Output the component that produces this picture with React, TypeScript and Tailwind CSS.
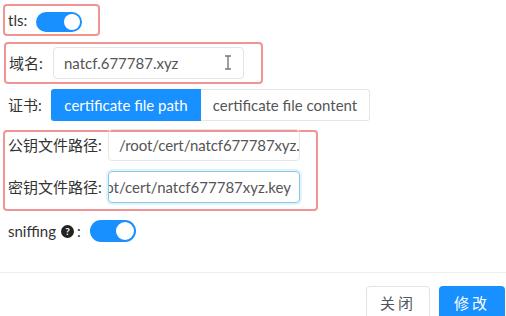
import React from "react";

function Switch({ h = 20 }: { h?: number }) {
  return (
    <div
      className="relative rounded-full bg-[#1890ff] w-[46px]"
      style={{ height: h }}
    >
      <div
        className="absolute top-[2px] right-[2px] rounded-full bg-white"
        style={{ width: h - 4, height: h - 4 }}
      />
    </div>
  );
}

function IBeam() {
  return (
    <svg
      className="absolute right-[11px] top-[7px]"
      width="8"
      height="15"
      viewBox="0 0 8 15"
      fill="none"
      stroke="#777"
      strokeWidth="1.4"
    >
      <path d="M1 1h6M4 1v13M1 14h6" />
    </svg>
  );
}

export default function App() {
  return (
    <div
      className="relative w-[506px] h-[316px] overflow-hidden bg-white text-[15px] text-[#333]"
      style={{ fontFamily: 'Lato, "Noto Sans CJK SC", sans-serif' }}
    >
      <div className="flex flex-col pl-[3px] pt-[4px]">
        {/* tls */}
        <div className="flex items-center w-[97px] h-[32px] border-2 border-[#f29494] rounded-[4px] pl-[3px]">
          <span className="leading-none">tls:</span>
          <div className="ml-[9px] mt-[4px]">
            <Switch h={20} />
          </div>
        </div>

        {/* domain */}
        <div className="flex items-center mt-[6px] ml-[1px] w-[259px] h-[42px] border-2 border-[#f29494] rounded-[4px] pl-[3px]">
          <span className="leading-none w-[44px]">域名:</span>
          <div className="relative flex items-center w-[191px] h-[32px] border border-[#e3e3e3] rounded-[4px] pl-[10px] text-[#555]">
            natcf.677787.xyz
            <IBeam />
          </div>
        </div>

        {/* cert */}
        <div className="flex items-center mt-[5px] h-[32px] pl-[5px]">
          <span className="leading-none w-[43px]">证书:</span>
          <div className="flex h-[32px]">
            <div className="flex items-center justify-center w-[150px] bg-[#1890ff] text-white rounded-l-[3px]">
              certificate file path
            </div>
            <div className="flex items-center justify-center w-[169px] border border-l-0 border-[#e6e6e6] text-[#555] rounded-r-[3px]">
              certificate file content
            </div>
          </div>
        </div>

        {/* keys */}
        <div className="mt-[9px] w-[315px] h-[81px] border-2 border-[#f29494] rounded-[4px] pl-[3px] flex flex-col">
          <div className="flex items-center mt-[-3px] h-[32px]">
            <span className="leading-none w-[100px]">公钥文件路径:</span>
            <div className="flex items-center w-[192px] h-[32px] border border-[#e6e6e6] rounded-[4px] pl-[10px] text-[#555] tracking-[-0.1px] overflow-hidden whitespace-nowrap">
              /root/cert/natcf677787xyz.
            </div>
          </div>
          <div className="flex items-center mt-[10px] h-[32px]">
            <span className="leading-none w-[100px]">密钥文件路径:</span>
            <div className="relative w-[192px] h-[32px] border border-[#86cbe0] shadow-[0_0_0_2px_rgba(24,144,255,0.12)] rounded-[4px] text-[#555] overflow-hidden whitespace-nowrap">
              <span className="absolute right-[8px] top-0 h-full flex items-center">
                /root/cert/natcf677787xyz.key
              </span>
            </div>
          </div>
        </div>

        {/* sniffing */}
        <div className="flex items-center mt-[9px] h-[22px] pl-[5px]">
          <span className="leading-none">sniffing</span>
          <span className="ml-[5px] flex items-center justify-center w-[13px] h-[13px] rounded-full bg-[#222] text-white text-[10px] font-bold leading-none">
            ?
          </span>
          <span className="ml-[3px] leading-none">:</span>
          <div className="ml-[9px]">
            <Switch h={22} />
          </div>
        </div>
      </div>

      {/* footer */}
      <div className="absolute left-0 right-0 top-[272px] border-t border-[#efefef] flex justify-end gap-[9px] pt-[13px] pr-[1px]">
        <div className="flex items-center justify-center w-[64px] h-[34px] border border-[#e3e3e3] rounded-[4px] text-[#555] tracking-[3px]">
          关闭
        </div>
        <div className="flex items-center justify-center w-[66px] h-[34px] bg-[#1890ff] rounded-[4px] text-white tracking-[3px]">
          修改
        </div>
      </div>
    </div>
  );
}
